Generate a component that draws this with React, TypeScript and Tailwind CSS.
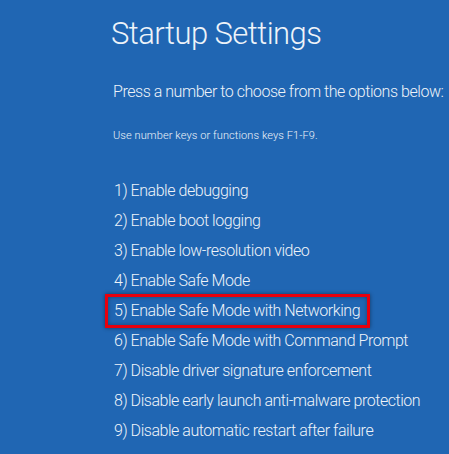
import React from "react";

const items = [
  "1) Enable debugging",
  "2) Enable boot logging",
  "3) Enable low-resolution video",
  "4) Enable Safe Mode",
  "5) Enable Safe Mode with Networking",
  "6) Enable Safe Mode with Command Prompt",
  "7) Disable driver signature enforcement",
  "8) Disable early launch anti-malware protection",
  "9) Disable automatic restart after failure",
];

export default function App() {
  return (
    <div
      className="w-[449px] h-[454px] overflow-hidden bg-[#2066b3] text-[#eef3f9] pl-[111px] whitespace-nowrap"
      style={{ fontFamily: "Roboto, 'Open Sans', sans-serif" }}
    >
      <h1 className="pt-[16px] text-[31px] leading-[36px] font-light tracking-[-0.55px]">
        Startup Settings
      </h1>
      <p className="mt-[30px] pl-[2px] text-[16px] leading-[20px] font-light tracking-[-0.46px]">
        Press a number to choose from the options below:
      </p>
      <p className="mt-[27px] pl-[2px] text-[11px] leading-[14px] font-light tracking-[0.1px]">
        Use number keys or functions keys F1-F9.
      </p>
      <ul className="mt-[33px] pl-[3px] text-[16px] font-light tracking-[-0.46px]">
        {items.map((t, i) =>
          i === 4 ? (
            <li key={t} className="h-[30px] flex items-center">
              <span className="ml-[-9px] h-[34px] w-[265px] shrink-0 flex items-center pl-[6px] border-[3px] border-[#e8000d] shadow-[0_0_4px_rgba(0,0,0,0.45),inset_0_0_4px_rgba(0,0,0,0.35)]">
                {t}
              </span>
            </li>
          ) : (
            <li key={t} className="h-[30px] flex items-center">
              {t}
            </li>
          )
        )}
      </ul>
    </div>
  );
}
